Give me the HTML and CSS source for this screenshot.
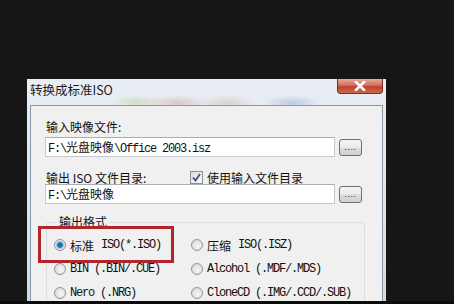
FILE: index.html
```html
<!DOCTYPE html>
<html lang="zh-CN">
<head>
    <meta charset="UTF-8">
    <title>转换成标准ISO</title>
    <link rel="stylesheet" href="styles.css">
</head>
<body>
    <div class="screen">
        <div class="window">
            <div class="titlebar">
                <span class="title">转换成标准ISO</span>
                <span class="close">
                    <svg width="12" height="10" viewBox="0 0 12 10">
                        <path d="M2 1 L10 9 M10 1 L2 9" stroke="#fff" stroke-width="2.6" stroke-linecap="square"/>
                    </svg>
                </span>
            </div>

            <div class="panel">
                <div class="label">输入映像文件:</div>
                <div class="field-row">
                    <div class="input mono">F:\<span class="cn">光盘映像</span>\Office 2003.isz</div>
                    <button class="browse">....</button>
                </div>

                <div class="out-row">
                    <span class="out-label">输出 ISO 文件目录:</span>
                    <span class="check">
                        <svg width="9" height="9" viewBox="0 0 9 9">
                            <path d="M1 4.5 L3.5 7.5 L8 1" fill="none" stroke="#3c4f86" stroke-width="1.8"/>
                        </svg>
                    </span>
                    <span>使用输入文件目录</span>
                </div>
                <div class="field-row">
                    <div class="input mono">F:\<span class="cn">光盘映像</span></div>
                    <button class="browse">....</button>
                </div>

                <fieldset class="group">
                    <legend>输出格式</legend>
                    <div class="options">
                        <label class="option mono"><span class="radio on"></span><span class="cn gap">标准</span>ISO(*.ISO)</label>
                        <label class="option mono"><span class="radio"></span><span class="cn gap">压缩</span>ISO(.ISZ)</label>
                        <label class="option mono"><span class="radio"></span>BIN (.BIN/.CUE)</label>
                        <label class="option mono"><span class="radio"></span>Alcohol (.MDF/.MDS)</label>
                        <label class="option mono"><span class="radio"></span>Nero (.NRG)</label>
                        <label class="option mono"><span class="radio"></span>CloneCD (.IMG/.CCD/.SUB)</label>
                    </div>
                </fieldset>
            </div>
        </div>

        <div class="mark"></div>
    </div>
</body>
</html>
```

FILE: styles.css
```css
body {
    margin: 0;
    background: #0c0c0c;
    font-family: "Noto Sans CJK SC", "Liberation Sans", sans-serif;
    font-size: 12px;
    color: #111;
}

.screen {
    position: relative;
    width: 454px;
    height: 301px;
    overflow: hidden;
    background: #161616;
    padding: 79px 0 0 27px;
    box-sizing: border-box;
}

.window {
    width: 359px;
    padding: 0 3px;
    box-sizing: border-box;
    background:
        radial-gradient(ellipse 30px 8px at 150px 24px, rgba(210,150,140,0.45), transparent),
        radial-gradient(ellipse 26px 7px at 110px 23px, rgba(190,205,150,0.5), transparent),
        radial-gradient(ellipse 30px 8px at 200px 24px, rgba(200,170,150,0.4), transparent),
        radial-gradient(ellipse 28px 8px at 265px 24px, rgba(150,170,210,0.5), transparent),
        linear-gradient(#e9eef3, #d9e3ec 70%, #cfdae4);
}

.titlebar {
    height: 26px;
    display: flex;
    justify-content: space-between;
    align-items: flex-start;
}

.title {
    padding-top: 3px;
    line-height: 16px;
    font-size: 12.5px;
    color: #1a1a1a;
}

.close {
    width: 46px;
    height: 15px;
    box-sizing: border-box;
    display: flex;
    align-items: center;
    justify-content: center;
    border: 1px solid #7a2c20;
    border-top: none;
    border-radius: 0 0 4px 4px;
    background: linear-gradient(#e9a999, #d3715e 45%, #c0412b 55%, #cf6a4f);
}

.panel {
    height: 200px;
    background: #f0f0f0;
    border: 1px solid #8a98a6;
    padding: 13px 0 0 14px;
    box-sizing: border-box;
}

.label {
    line-height: 16px;
    padding-left: 1px;
    margin-bottom: 2px;
}

.field-row {
    display: flex;
    align-items: center;
}

.input {
    width: 290px;
    height: 20px;
    box-sizing: border-box;
    background: #fff;
    border: 1px solid #c5c8cc;
    border-top-color: #abadb3;
    padding-left: 2px;
    line-height: 18px;
    white-space: nowrap;
}

.browse {
    width: 23px;
    height: 17px;
    margin-left: 4px;
    padding: 0;
    border: 1px solid #707070;
    border-radius: 3px;
    background: linear-gradient(#f4f4f4, #ebebeb 50%, #dddddd 50%, #cfcfcf);
    font-size: 9px;
    line-height: 12px;
    color: #333;
    letter-spacing: 0.5px;
}

.mono {
    font-family: "Liberation Mono", "Noto Sans CJK SC", monospace;
    font-size: 12px;
    letter-spacing: -1.2px;
}

.cn {
    font-family: "Noto Sans CJK SC", sans-serif;
    font-size: 12px;
    letter-spacing: 0;
}

.cn.gap {
    margin-right: 7px;
}

.out-row {
    display: flex;
    align-items: center;
    height: 14px;
    margin: 13px 0 0 1px;
}

.out-label {
    width: 144px;
}

.check {
    width: 13px;
    height: 13px;
    box-sizing: border-box;
    border: 1px solid #8e8f8f;
    background: linear-gradient(135deg, #dcdcdc, #fbfbfb);
    display: flex;
    align-items: center;
    justify-content: center;
    margin-right: 4px;
}

.group {
    width: 319px;
    box-sizing: border-box;
    margin: 11px 0 0 1px;
    padding: 4px 0 0 7px;
    height: 100px;
    border: 1px solid #d5dfe5;
    border-radius: 3px;
}

.group legend {
    padding: 0 2px;
    margin-left: 3px;
    line-height: 14px;
}

.options {
    display: grid;
    grid-template-columns: 137px 1fr;
}

.option {
    height: 24px;
    display: flex;
    align-items: center;
    white-space: nowrap;
}

.radio {
    width: 12px;
    height: 12px;
    box-sizing: border-box;
    border-radius: 50%;
    border: 1px solid #939393;
    background: radial-gradient(circle at 60% 60%, #f6f6f6, #d4d4d4);
    margin-right: 4px;
    flex-shrink: 0;
}

.radio.on {
    background: radial-gradient(circle, #1e5b86 0, #2e7fb5 2.5px, #9fc9e4 3.5px, #e8e8e8 4.5px);
}

.mark {
    position: absolute;
    left: 38px;
    top: 226px;
    width: 136px;
    height: 37px;
    box-sizing: border-box;
    border: 3px solid #b0262c;
}
```
